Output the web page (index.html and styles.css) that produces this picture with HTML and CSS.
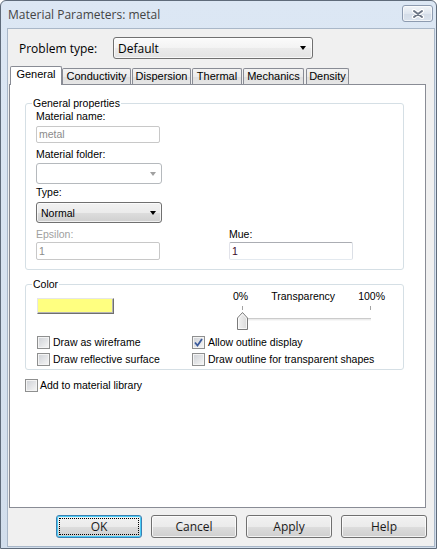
FILE: index.html
```html
<!DOCTYPE html>
<html>
<head>
<meta charset="utf-8">
<title>Material Parameters: metal</title>
<link rel="stylesheet" href="styles.css">
</head>
<body>
<div class="window">
  <div class="titlebar">
    <span class="title">Material Parameters: metal</span>
    <div class="close">
      <svg width="14" height="10" viewBox="0 0 14 10"><path d="M3 2 L11 8 M11 2 L3 8" stroke="#ffffff" stroke-width="4.2" stroke-linecap="round"/><path d="M3 2 L11 8 M11 2 L3 8" stroke="#6b7585" stroke-width="2" stroke-linecap="round"/></svg>
    </div>
  </div>
  <div class="client">
    <div class="problem-row">
      <span class="ui-label">Problem type:</span>
      <div class="combo combo-problem"><span class="combo-text">Default</span><span class="arrow"></span></div>
    </div>
    <div class="tabs">
      <div class="tab active w-general">General</div>
      <div class="tab w-cond">Conductivity</div>
      <div class="tab w-disp">Dispersion</div>
      <div class="tab w-therm">Thermal</div>
      <div class="tab w-mech">Mechanics</div>
      <div class="tab w-dens">Density</div>
    </div>
    <div class="panel">
      <div class="group group-general">
        <span class="group-title">General properties</span>
        <div class="lbl">Material name:</div>
        <div class="edit edit-disabled edit-name">metal</div>
        <div class="lbl lbl-folder">Material folder:</div>
        <div class="combo combo-disabled combo-small"><span class="combo-text"></span><span class="arrow arrow-gray"></span></div>
        <div class="lbl lbl-type">Type:</div>
        <div class="combo combo-small combo-type"><span class="combo-text">Normal</span><span class="arrow"></span></div>
        <div class="eps-row">
          <div>
            <div class="lbl lbl-disabled">Epsilon:</div>
            <div class="edit edit-disabled edit-num">1</div>
          </div>
          <div>
            <div class="lbl">Mue:</div>
            <div class="edit edit-num edit-mue">1</div>
          </div>
        </div>
      </div>
      <div class="group group-color">
        <span class="group-title">Color</span>
        <div class="color-top">
          <div class="swatch"></div>
          <div class="slider">
            <div class="slider-labels"><span>0%</span><span>Transparency</span><span>100%</span></div>
            <div class="slider-area">
              <span class="tick tick-left"></span>
              <span class="tick tick-right"></span>
              <span class="track"></span>
              <svg class="thumb" width="11" height="18" viewBox="0 0 11 18">
                <defs><linearGradient id="tg" x1="0" y1="0" x2="1" y2="0"><stop offset="0" stop-color="#f4f4f4"/><stop offset="1" stop-color="#d9d9d9"/></linearGradient></defs>
                <path d="M0.5 17.5 V6 L5.5 0.5 L10.5 6 V17.5 Z" fill="url(#tg)" stroke="#7a7a7a"/>
                <path d="M1.5 16.5 V6.4 L5.5 2 L9.5 6.4 V16.5 Z" fill="none" stroke="#ffffff" stroke-opacity="0.7"/>
              </svg>
            </div>
          </div>
        </div>
        <div class="checks">
          <label class="check"><span class="box"></span><span>Draw as wireframe</span></label>
          <label class="check"><span class="box checked"><svg width="9" height="9" viewBox="0 0 9 9"><path d="M1 4.5 L3.5 7.5 L8 1" fill="none" stroke="#3a5a9c" stroke-width="1.8"/></svg></span><span>Allow outline display</span></label>
          <label class="check"><span class="box"></span><span>Draw reflective surface</span></label>
          <label class="check"><span class="box"></span><span>Draw outline for transparent shapes</span></label>
        </div>
      </div>
      <label class="check add-lib"><span class="box"></span><span>Add to material library</span></label>
    </div>
    <div class="buttons">
      <div class="btn btn-default"><span class="focus">OK</span></div>
      <div class="btn">Cancel</div>
      <div class="btn">Apply</div>
      <div class="btn">Help</div>
    </div>
  </div>
</div>
</body>
</html>
```
FILE: styles.css
```css
* { box-sizing: border-box; }

body {
  margin: 0;
  background: #ffffff;
  font-family: "Liberation Sans", Arial, sans-serif;
  font-size: 10.5px;
  color: #000000;
}

.window {
  width: 437px;
  height: 549px;
  border: 1px solid #5f6b7a;
  border-radius: 6px 6px 0 0;
  background: linear-gradient(#dce7f4, #d2deec);
  padding: 0 1px 1px 6px;
  display: flex;
  flex-direction: column;
}

.titlebar {
  height: 27px;
  display: flex;
  justify-content: space-between;
  padding-left: 1px;
}

.title {
  font-family: "Open Sans", "Liberation Sans", sans-serif;
  font-size: 12px;
  color: #444444;
  line-height: 27px;
}

.close {
  width: 31px;
  height: 17px;
  margin-top: 4px;
  margin-right: 2px;
  border: 1px solid #8d9bb0;
  border-radius: 3px;
  background: linear-gradient(#f2f5f9, #dfe6ef 50%, #d3dce8 51%, #dbe3ed);
  box-shadow: inset 0 0 0 1px rgba(255,255,255,0.6);
  display: flex;
  align-items: center;
  justify-content: center;
}

.client {
  flex: 1;
  border: 1px solid #a9b7c8;
  background: #f0f0f0;
  display: flex;
  flex-direction: column;
}

.problem-row {
  display: flex;
  align-items: center;
  padding: 8px 0 0 11px;
}

.ui-label {
  font-family: "Open Sans", "Liberation Sans", sans-serif;
  font-size: 12px;
  width: 94px;
}

.combo {
  position: relative;
  display: flex;
  align-items: center;
  border: 1px solid #707070;
  border-radius: 3px;
  background: linear-gradient(#f2f2f2, #ebebeb 50%, #dddddd 51%, #cfcfcf);
  box-shadow: inset 0 0 0 1px rgba(255,255,255,0.7);
}

.combo-problem {
  width: 200px;
  height: 22px;
  background: linear-gradient(#fbfbfb, #f3f3f3 50%, #ebebeb 51%, #e3e3e3);
}

.combo-problem .combo-text {
  font-family: "Open Sans", "Liberation Sans", sans-serif;
  font-size: 12px;
  padding-left: 4px;
}

.combo-text {
  flex: 1;
  padding-left: 4px;
}

.arrow {
  width: 0;
  height: 0;
  border-left: 3.5px solid transparent;
  border-right: 3.5px solid transparent;
  border-top: 4px solid #000000;
  margin-right: 5px;
}

.combo-problem .arrow { margin-right: 6px; }

.arrow-gray { border-top-color: #a0a0a0; }

.combo-small {
  width: 126px;
  height: 21px;
}

.combo-disabled {
  border-color: #b5b9bd;
  background: #ffffff;
  box-shadow: none;
}

.tabs {
  display: flex;
  align-items: flex-end;
  height: 18px;
  margin-top: 7px;
  margin-left: 1px;
}

.tab {
  height: 16px;
  border: 1px solid #898c95;
  border-bottom: none;
  border-radius: 2px 2px 0 0;
  background: linear-gradient(#f3f3f3, #ebebeb 50%, #dfdfdf 51%, #e6e6e6);
  text-align: center;
  line-height: 15px;
  margin-left: 1px;
  font-size: 11px;
}

.tab.active {
  height: 19px;
  margin-bottom: -1px;
  background: #ffffff;
  position: relative;
  z-index: 1;
  line-height: 14px;
}

.w-general { width: 52px; }
.w-cond { width: 69px; margin-left: 0; }
.w-disp { width: 59px; }
.w-therm { width: 50px; }
.w-mech { width: 61px; }
.w-dens { width: 43px; margin-left: 2px; }

.panel {
  height: 424px;
  margin: 0 8px 0 1px;
  border: 1px solid #898c95;
  background: #ffffff;
  padding: 18px 0 0 15px;
}

.group {
  position: relative;
  width: 379px;
  border: 1px solid #d5dfe5;
  border-radius: 3px;
}

.group-title {
  position: absolute;
  top: -7px;
  left: 6px;
  padding: 0 1px;
  background: #ffffff;
  line-height: 13px;
}

.group-general {
  height: 167px;
  padding: 6px 0 0 10px;
}

.lbl {
  height: 13px;
  line-height: 13px;
}

.lbl-disabled { color: #a0a0a0; }

.edit {
  width: 124px;
  height: 17px;
  margin-top: 3px;
  border: 1px solid #abadb3;
  border-left-color: #e2e3ea;
  border-right-color: #dbdfe6;
  border-bottom-color: #e3e9ef;
  border-radius: 2px;
  background: #ffffff;
  padding-left: 2px;
  line-height: 15px;
}

.edit-disabled {
  color: #8b8b8b;
  border-color: #c8c8c8;
}

.lbl-folder { margin-top: 5px; }
.combo-disabled { margin-top: 2px; }
.lbl-type { margin-top: 2px; }
.combo-type { margin-top: 3px; }

.eps-row {
  display: grid;
  grid-template-columns: 193px 124px;
  margin-top: 5px;
}

.edit-num {
  height: 18px;
  margin-top: 1px;
  line-height: 16px;
}

.edit-mue { color: #3c0a28; }

.group-color {
  height: 86px;
  margin-top: 14px;
  padding: 0 0 0 11px;
}

.color-top {
  display: flex;
}

.swatch {
  width: 77px;
  height: 16px;
  margin-top: 13px;
  background: #ffff80;
  border: 1px solid;
  border-color: #e6e6e6 #6f6f6f #6f6f6f #e6e6e6;
  box-shadow: inset -1px -1px 0 #b4b4b4;
}

.slider {
  width: 152px;
  margin-left: 119px;
  padding-top: 5px;
}

.slider-labels {
  display: flex;
  justify-content: space-between;
  height: 13px;
  line-height: 13px;
}

.slider-area {
  position: relative;
  height: 23px;
  margin-top: 3px;
}

.tick {
  position: absolute;
  top: 0;
  width: 1px;
  height: 4px;
  background: #a3a3a3;
}

.tick-left { left: 9px; }
.tick-right { left: 137px; }

.track {
  position: absolute;
  left: 10px;
  top: 12px;
  width: 128px;
  height: 3px;
  background: #ececec;
  border-top: 1px solid #cbcbcb;
  border-bottom: 1px solid #f7f7f7;
}

.thumb {
  position: absolute;
  left: 4px;
  top: 6px;
}

.checks {
  display: grid;
  grid-template-columns: 155px auto;
  grid-auto-rows: 16px;
  row-gap: 1px;
  margin-top: 5px;
}

.check {
  display: flex;
  align-items: center;
  gap: 3px;
  height: 16px;
  white-space: nowrap;
}

.box {
  width: 13px;
  height: 13px;
  flex: none;
  border: 1px solid #8e8f8f;
  background: linear-gradient(135deg, #cdd0d5, #f7f7f7);
  box-shadow: inset 0 0 0 1px #f4f4f4;
  display: flex;
  align-items: center;
  justify-content: center;
}

.add-lib {
  margin-top: 7px;
  gap: 2px;
}

.buttons {
  display: flex;
  justify-content: flex-end;
  gap: 9px;
  margin-top: 7px;
  padding-right: 7px;
}

.btn {
  width: 86px;
  height: 23px;
  border: 1px solid #707070;
  border-radius: 3px;
  background: linear-gradient(#f2f2f2, #ebebeb 50%, #dddddd 51%, #cfcfcf);
  box-shadow: inset 0 0 0 1px rgba(255,255,255,0.75);
  font-family: "Open Sans", "Liberation Sans", sans-serif;
  font-size: 12px;
  color: #1a1a1a;
  display: flex;
  align-items: center;
  justify-content: center;
  padding: 2px;
}

.btn-default {
  border-color: #3c7fb1;
  box-shadow: inset 0 0 0 1px #48cdf7;
}

.focus {
  flex: 1;
  align-self: stretch;
  border: 1px dotted #000000;
  display: flex;
  align-items: center;
  justify-content: center;
}
```
